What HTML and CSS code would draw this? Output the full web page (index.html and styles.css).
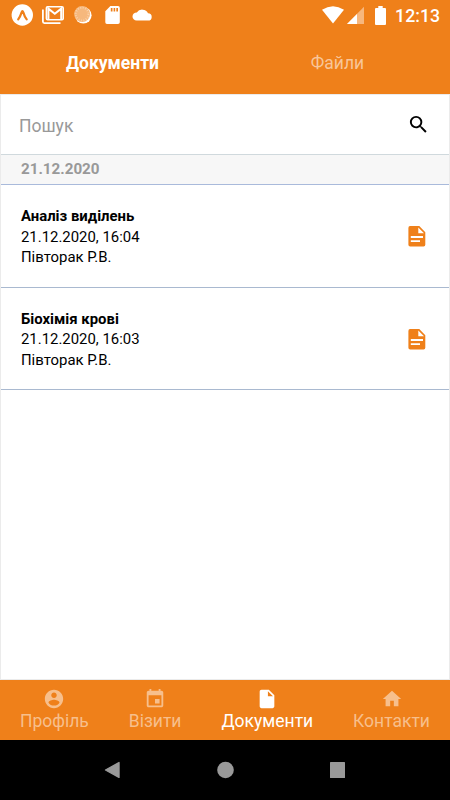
FILE: index.html
```html
<!DOCTYPE html>
<html lang="uk">
<head>
    <meta charset="UTF-8">
    <meta name="viewport" content="width=device-width, initial-scale=1.0">
    <title>Документи</title>
    <link rel="stylesheet" href="styles.css">
</head>
<body>

<div class="app">
    <header class="header">
        <!-- Status bar -->
        <div class="status-bar">
            <div class="status-left">
                <svg width="22" height="22" viewBox="0 0 22 22">
                    <circle cx="11.3" cy="11" r="10.7" fill="#fff"/>
                    <path d="M7.2 15.4Q9.4 12.4 10.6 8.4Q11.4 6 12.3 8.4Q13.4 12.4 15.7 15.4" fill="none" stroke="#ef801a" stroke-width="2.2" stroke-linecap="round"/>
                </svg>
                <svg width="22" height="18" viewBox="0 0 22 18">
                    <path d="M.9 3.5V15.6Q.9 17.1 2.4 17.1H18.5" fill="none" stroke="#fff" stroke-width="1.8"/>
                    <path d="M5.6 .8H19.9Q21.2 .8 21.2 2V12.6Q21.2 13.8 19.9 13.8H5.6Q4.4 13.8 4.4 12.6V2Q4.4 .8 5.6 .8Z" fill="none" stroke="#fff" stroke-width="1.6"/>
                    <path d="M6.4 13.4V2.6L12.8 7.8L19.2 2.6V13.4" fill="none" stroke="#fff" stroke-width="2"/>
                </svg>
                <svg width="18" height="18" viewBox="0 0 18 18">
                    <circle cx="9.3" cy="9.3" r="8.3" fill="#fff"/>
                    <circle cx="8.1" cy="8.1" r="8" fill="#f6b87d"/>
                    <circle cx="8.1" cy="8.1" r="6.4" fill="none" stroke="#fad0a7" stroke-width="2" stroke-dasharray="1 1.5"/>
                </svg>
                <svg width="15" height="18" viewBox="0 0 15 18">
                    <path fill="#fff" fill-rule="evenodd" d="M5.4 0H13Q14.8 0 14.8 1.8V16.2Q14.8 18 13 18H2Q.3 18 .3 16.2V5.2ZM5.8 2V5.5H7.5V2ZM8.6 2V5.5H10.2V2ZM11.3 2V5.5H13V2Z"/>
                </svg>
                <svg width="20" height="12" viewBox="0 0 20 12">
                    <path fill="#fff" d="M16 4.2A6.3 5.8 0 0 0 4.8 3.4A4.2 4.1 0 0 0 4.6 11.6H16A3.7 3.7 0 0 0 16 4.2Z"/>
                </svg>
            </div>
            <div class="status-right">
                <svg width="22" height="18" viewBox="0 0 22 18">
                    <path fill="#fff" d="M0 3.8Q11-3.4 22 3.8L11 17.4Z"/>
                </svg>
                <svg class="signal" width="17" height="18" viewBox="0 0 17 18">
                    <path fill="#f7b77d" d="M17 .8V18H0Z"/>
                    <path fill="#fff" d="M10 7.9V18H0Z"/>
                </svg>
                <svg class="battery" width="11" height="19" viewBox="0 0 11 19">
                    <path fill="#fff" d="M3.3 0H7.7V2H10Q11 2 11 3V18Q11 19 10 19H1Q0 19 0 18V3Q0 2 1 2H3.3Z"/>
                </svg>
                <span class="time">12:13</span>
            </div>
        </div>

        <div class="tabs">
            <a class="tab active">Документи</a>
            <a class="tab">Файли</a>
        </div>
    </header>

    <main class="content">
        <div class="search">
            <span class="placeholder">Пошук</span>
            <svg width="23" height="23" viewBox="0 0 24 24">
                <path d="M15.5 14h-.79l-.28-.27A6.471 6.471 0 0 0 16 9.5 6.5 6.5 0 1 0 9.5 16c1.61 0 3.09-.59 4.23-1.57l.27.28v.79l5 4.99L20.49 19l-4.99-5zm-6 0C7.01 14 5 11.99 5 9.5S7.01 5 9.5 5 14 7.01 14 9.5 11.99 14 9.5 14z"/>
            </svg>
        </div>

        <div class="date">21.12.2020</div>

        <!-- Documents -->
        <div class="document">
            <div class="info">
                <div class="name">Аналіз виділень</div>
                <div>21.12.2020, 16:04</div>
                <div>Півторак Р.В.</div>
            </div>
            <svg width="18" height="21" viewBox="0 0 18 21">
                <path fill="#ef801a" fill-rule="evenodd" d="M2 0H11.3L17.3 6.2V18.8Q17.3 20.5 15.6 20.5H2.2Q.4 20.5 .4 18.8V2Q.4 0 2 0ZM10.3 1.6V7.2H16ZM2.8 10V11.9H15V10ZM2.8 14.2V16.1H12V14.2Z"/>
            </svg>
        </div>
        <div class="document">
            <div class="info">
                <div class="name">Біохімія крові</div>
                <div>21.12.2020, 16:03</div>
                <div>Півторак Р.В.</div>
            </div>
            <svg width="18" height="21" viewBox="0 0 18 21">
                <path fill="#ef801a" fill-rule="evenodd" d="M2 0H11.3L17.3 6.2V18.8Q17.3 20.5 15.6 20.5H2.2Q.4 20.5 .4 18.8V2Q.4 0 2 0ZM10.3 1.6V7.2H16ZM2.8 10V11.9H15V10ZM2.8 14.2V16.1H12V14.2Z"/>
            </svg>
        </div>
    </main>

    <nav class="menu">
        <a class="menu-item">
            <svg width="22" height="22" viewBox="0 0 24 24">
                <path d="M12 2C6.48 2 2 6.48 2 12s4.48 10 10 10 10-4.48 10-10S17.52 2 12 2zm0 3c1.66 0 3 1.34 3 3s-1.34 3-3 3-3-1.34-3-3 1.34-3 3-3zm0 14.2c-2.5 0-4.71-1.28-6-3.22.03-1.99 4-3.08 6-3.08 1.99 0 5.97 1.09 6 3.08-1.29 1.94-3.5 3.22-6 3.22z"/>
            </svg>
            <span>Профіль</span>
        </a>
        <a class="menu-item">
            <svg width="22" height="22" viewBox="0 0 24 24">
                <path d="M17 12h-5v5h5v-5zM16 1v2H8V1H6v2H5c-1.11 0-1.99.9-1.99 2L3 19c0 1.1.89 2 2 2h14c1.1 0 2-.9 2-2V5c0-1.1-.9-2-2-2h-1V1h-2zm3 18H5V8h14v11z"/>
            </svg>
            <span>Візити</span>
        </a>
        <a class="menu-item active">
            <svg width="22" height="22" viewBox="0 0 24 24">
                <path d="M6 2c-1.1 0-1.99.9-1.99 2L4 20c0 1.1.89 2 1.99 2H18c1.1 0 2-.9 2-2V8l-6-6H6zm7 7V3.5L18.5 9H13z"/>
            </svg>
            <span>Документи</span>
        </a>
        <a class="menu-item">
            <svg width="22" height="22" viewBox="0 0 24 24">
                <path d="M10 20v-6h4v6h5v-8h3L12 3 2 12h3v8z"/>
            </svg>
            <span>Контакти</span>
        </a>
    </nav>

    <!-- System buttons -->
    <div class="system-bar">
        <svg width="17" height="18" viewBox="0 0 17 18">
            <path d="M1.5 9L15 1.6V16.4Z" stroke="#999" stroke-width="1.4" stroke-linejoin="round"/>
        </svg>
        <svg width="17" height="18" viewBox="0 0 17 18">
            <circle cx="8.5" cy="9" r="8.3"/>
        </svg>
        <svg width="17" height="18" viewBox="0 0 17 18">
            <rect x="1" y="1" width="15" height="16" rx=".5"/>
        </svg>
    </div>
</div>

</body>
</html>
```
FILE: styles.css
```css
* {
    box-sizing: border-box;
}

body {
    margin: 0;
    font-family: Roboto, "Liberation Sans", sans-serif;
    color: #000;
}

svg {
    display: block;
    flex-shrink: 0;
}

.app {
    width: 450px;
    height: 800px;
    display: flex;
    flex-direction: column;
    background-color: #fff;
}

/* Header */
.header {
    height: 94px;
    background-color: #ef801a;
    color: #fff;
}

.status-bar {
    height: 30px;
    padding: 0 10px 0 11px;
    display: flex;
    justify-content: space-between;
}

.status-left, .status-right {
    display: flex;
    align-items: center;
}

.status-left {
    gap: 9px;
}

.status-left svg:nth-child(3) {
    margin-left: 1px;
}

.status-left svg:nth-child(4) {
    margin-left: 4px;
}

.status-left svg:nth-child(5) {
    margin-left: 3px;
}

.signal {
    margin-left: 3px;
}

.battery {
    margin-left: 11px;
}

.time {
    margin-left: 9px;
    padding-top: 2px;
    font-size: 17.7px;
    font-weight: 500;
}

.tabs {
    height: 64px;
    display: flex;
}

.tab {
    flex: 1;
    text-align: center;
    line-height: 67px;
    font-size: 17.5px;
    color: #f8c699;
}

.tab.active {
    color: #fff;
    font-weight: 700;
}

/* Content */
.content {
    flex: 1;
    border: 1px solid #ebebeb;
}

.search {
    height: 60px;
    padding: 0 19px 0 18px;
    display: flex;
    align-items: center;
    justify-content: space-between;
    border-bottom: 1px solid #d0d9dd;
}

.placeholder {
    font-size: 17.5px;
    color: #999;
    padding-top: 2px;
}

.date {
    height: 30px;
    padding-left: 20px;
    line-height: 28px;
    font-size: 15.2px;
    font-weight: 700;
    color: #999;
    background-color: #f7f7f7;
    border-bottom: 1px solid #a9badb;
}

.document {
    height: 102.5px;
    padding: 0 23px 0 20px;
    display: flex;
    align-items: center;
    justify-content: space-between;
    border-bottom: 1px solid #a9b9d0;
    font-size: 14.9px;
    line-height: 20.5px;
}

.document svg {
    margin-top: 2px;
}

.info {
    padding-top: 2px;
}

.name {
    font-weight: 700;
}

/* Bottom menu */
.menu {
    height: 60px;
    padding: 8px 20px 0;
    display: flex;
    justify-content: space-between;
    background-color: #ef801a;
}

.menu-item {
    display: flex;
    flex-direction: column;
    align-items: center;
    font-size: 17.5px;
    line-height: 23px;
    color: #f7bf8c;
    fill: #f7bf8c;
}

.menu-item.active {
    color: #fff;
    fill: #fff;
}

.system-bar {
    height: 60px;
    display: flex;
    align-items: center;
    justify-content: center;
    gap: 95.5px;
    background-color: #000;
    fill: #999;
}
```
